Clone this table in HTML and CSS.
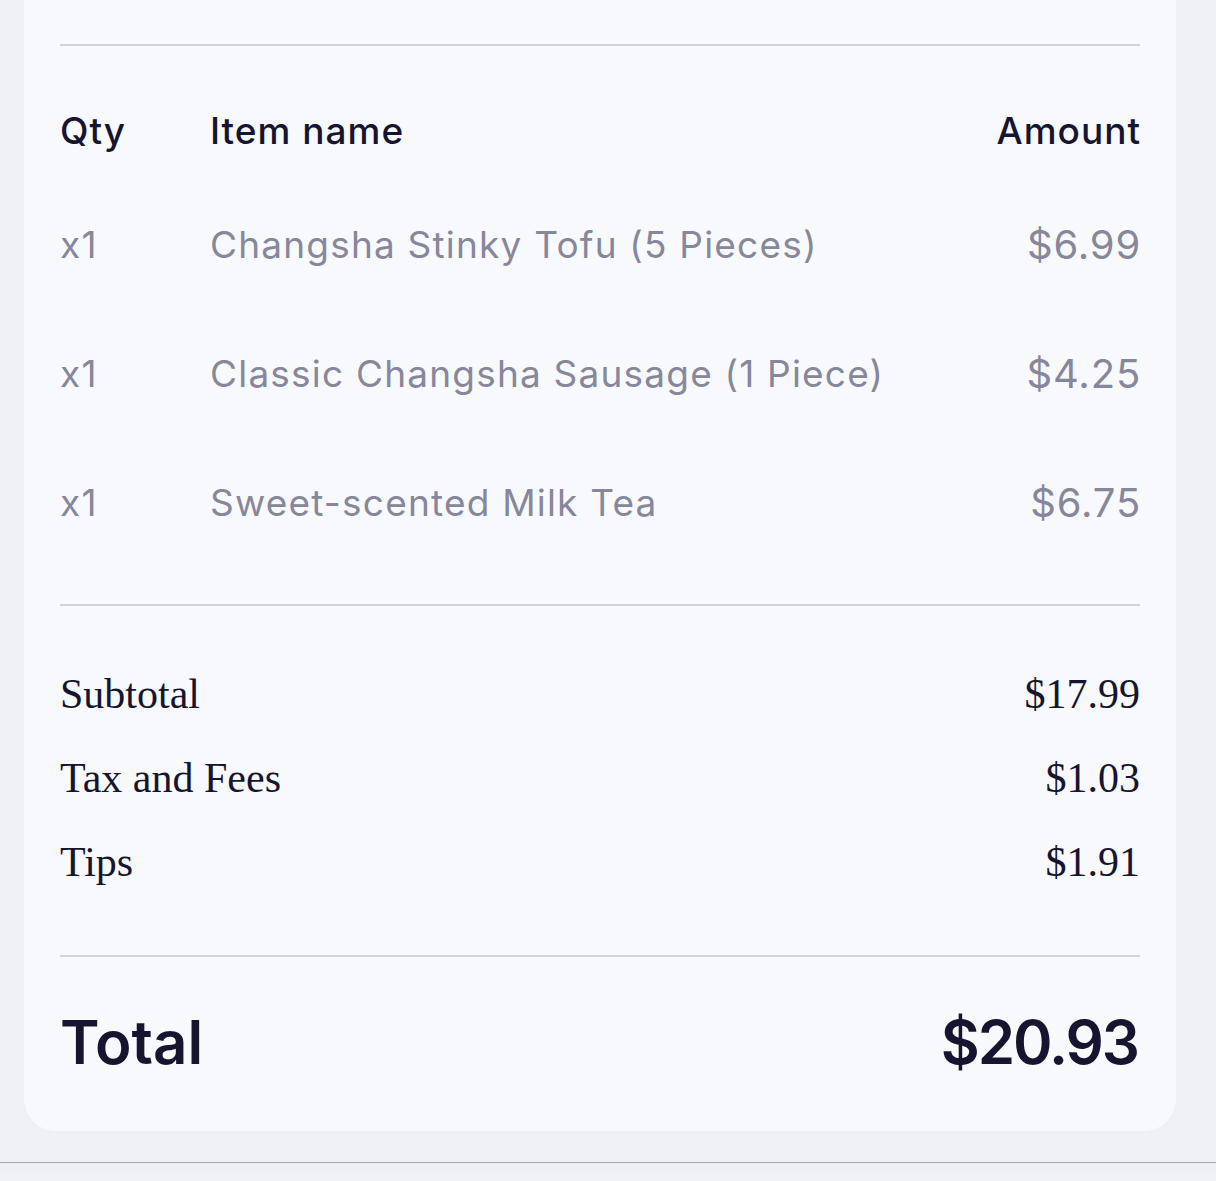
FILE: index.html
```html
<!DOCTYPE html>
<html lang="en">
<head>
<meta charset="utf-8">
<title>Receipt</title>
<link rel="stylesheet" href="styles.css">
</head>
<body>
<div class="page">
  <section class="card">
    <div class="divider"></div>
    <div class="row head">
      <span class="qty">Qty</span>
      <span class="name">Item name</span>
      <span class="amount">Amount</span>
    </div>
    <div class="row item">
      <span class="qty">x1</span>
      <span class="name">Changsha Stinky Tofu (5 Pieces)</span>
      <span class="amount">$6.99</span>
    </div>
    <div class="row item">
      <span class="qty">x1</span>
      <span class="name">Classic Changsha Sausage (1 Piece)</span>
      <span class="amount">$4.25</span>
    </div>
    <div class="row item">
      <span class="qty">x1</span>
      <span class="name">Sweet-scented Milk Tea</span>
      <span class="amount">$6.75</span>
    </div>
    <div class="divider mid"></div>
    <div class="summary">
      <div class="srow"><span>Subtotal</span><span>$17.99</span></div>
      <div class="srow"><span>Tax and Fees</span><span>$1.03</span></div>
      <div class="srow"><span>Tips</span><span>$1.91</span></div>
    </div>
    <div class="divider low"></div>
    <div class="total">
      <span>Total</span>
      <span class="total-amount">$20.93</span>
    </div>
  </section>
  <footer class="bottom-bar"></footer>
</div>
</body>
</html>
```
FILE: styles.css
```css
html, body {
  margin: 0;
  padding: 0;
}
body {
  background: #eef0f5;
  font-family: Inter, "Liberation Sans", sans-serif;
  color: #16152f;
  height: 1181px;
  overflow: hidden;
}
.page {
  display: flex;
  flex-direction: column;
  height: 100%;
}
.card {
  margin: 0 40px 0 24px;
  background: #f8f9fc;
  border-radius: 0 0 32px 32px;
  padding: 44px 36px 39px;
}
.divider {
  height: 2px;
  background: #d1d2da;
}
.divider.mid { margin-top: 37px; }
.divider.low { margin-top: 51px; }
.row {
  display: flex;
  align-items: center;
}
.row .qty { width: 150px; flex: none; }
.row .name { flex: 1; }
.row .amount { flex: none; text-align: right; }
.head {
  height: 100px;
  margin-top: 34px;
  font-size: 37px;
  font-weight: 500;
  letter-spacing: 1px;
  color: #16152f;
}
.head .amount { margin-right: -1px; }
.item {
  height: 129px;
  font-size: 37px;
  font-weight: 400;
  letter-spacing: 1.2px;
  color: #87879b;
}
.item .amount {
  font-size: 40px;
  letter-spacing: 0.8px;
  margin-right: -1px;
}
.summary {
  margin-top: 46px;
  font-family: "Liberation Serif", serif;
  font-size: 42px;
  color: #16152f;
}
.srow {
  height: 84px;
  display: flex;
  align-items: center;
  justify-content: space-between;
}
.total {
  margin-top: 35px;
  height: 100px;
  display: flex;
  align-items: center;
  justify-content: space-between;
  font-size: 60px;
  font-weight: 600;
  color: #16152f;
}
.total-amount {
  letter-spacing: -2px;
  margin-right: 2px;
}
.bottom-bar {
  margin-top: 31px;
  flex: 1;
  border-top: 1px solid #a3a4ab;
  background: linear-gradient(#eceef3, #f1f2f6);
}
```
